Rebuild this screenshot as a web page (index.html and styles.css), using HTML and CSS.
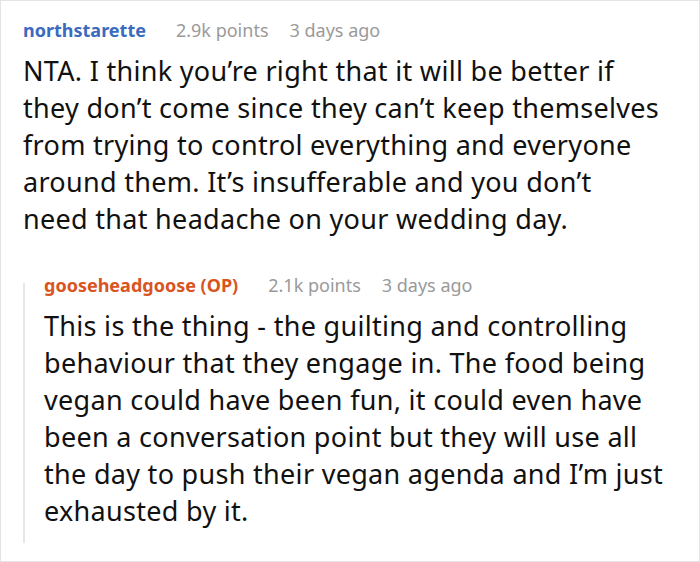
FILE: index.html
```html
<!DOCTYPE html>
<html>
<head>
<meta charset="utf-8">
<link rel="stylesheet" href="styles.css">
</head>
<body>
<div class="frame">
  <div class="comment">
    <div class="meta">
      <span class="user user-blue">northstarette</span>
      <span class="info">2.9k points</span>
      <span class="info">3 days ago</span>
    </div>
    <p class="text">NTA. I think you’re right that it will be better if they don’t come since they can’t keep themselves from trying to control everything and everyone around them. It’s insufferable and you don’t need&nbsp;that headache on your wedding day.</p>
  </div>
  <div class="reply">
    <div class="meta meta-reply">
      <span class="user user-orange">gooseheadgoose (OP)</span>
      <span class="info">2.1k points</span>
      <span class="info">3 days ago</span>
    </div>
    <p class="text">This is the thing - the guilting and controlling behaviour that they engage in. The food being vegan could have been fun, it could even have been a conversation point but they will use all the day to push their vegan agenda and I’m just exhausted by it.</p>
  </div>
</div>
</body>
</html>
```

FILE: styles.css
```css
html, body {
  margin: 0;
  padding: 0;
  background: #ffffff;
}
.frame {
  box-sizing: border-box;
  width: 700px;
  height: 562px;
  border: 1px solid #e4e4e4;
  padding: 17px 24px 0 22px;
  font-family: "Noto Sans", "Open Sans", sans-serif;
  color: #111111;
}
.meta {
  display: flex;
  gap: 21px;
  font-size: 18px;
  line-height: 24px;
  margin-bottom: 10px;
}
.user {
  font-weight: 700;
  margin-right: 9px;
}
.user-blue { color: #3a6bbf; }
.user-orange { color: #d9541e; }
.info { color: #9a9a9a; }
.text {
  margin: 0;
  font-size: 27px;
  letter-spacing: 0.3px;
  line-height: 37px;
}
.reply {
  display: flex;
  flex-direction: column;
  margin-top: 46px;
  padding: 0 0 14px 19px;
  border-left: 2px solid #e6e6e6;
}
.meta-reply {
  margin-top: -10px;
  margin-bottom: 10px;
}
```
